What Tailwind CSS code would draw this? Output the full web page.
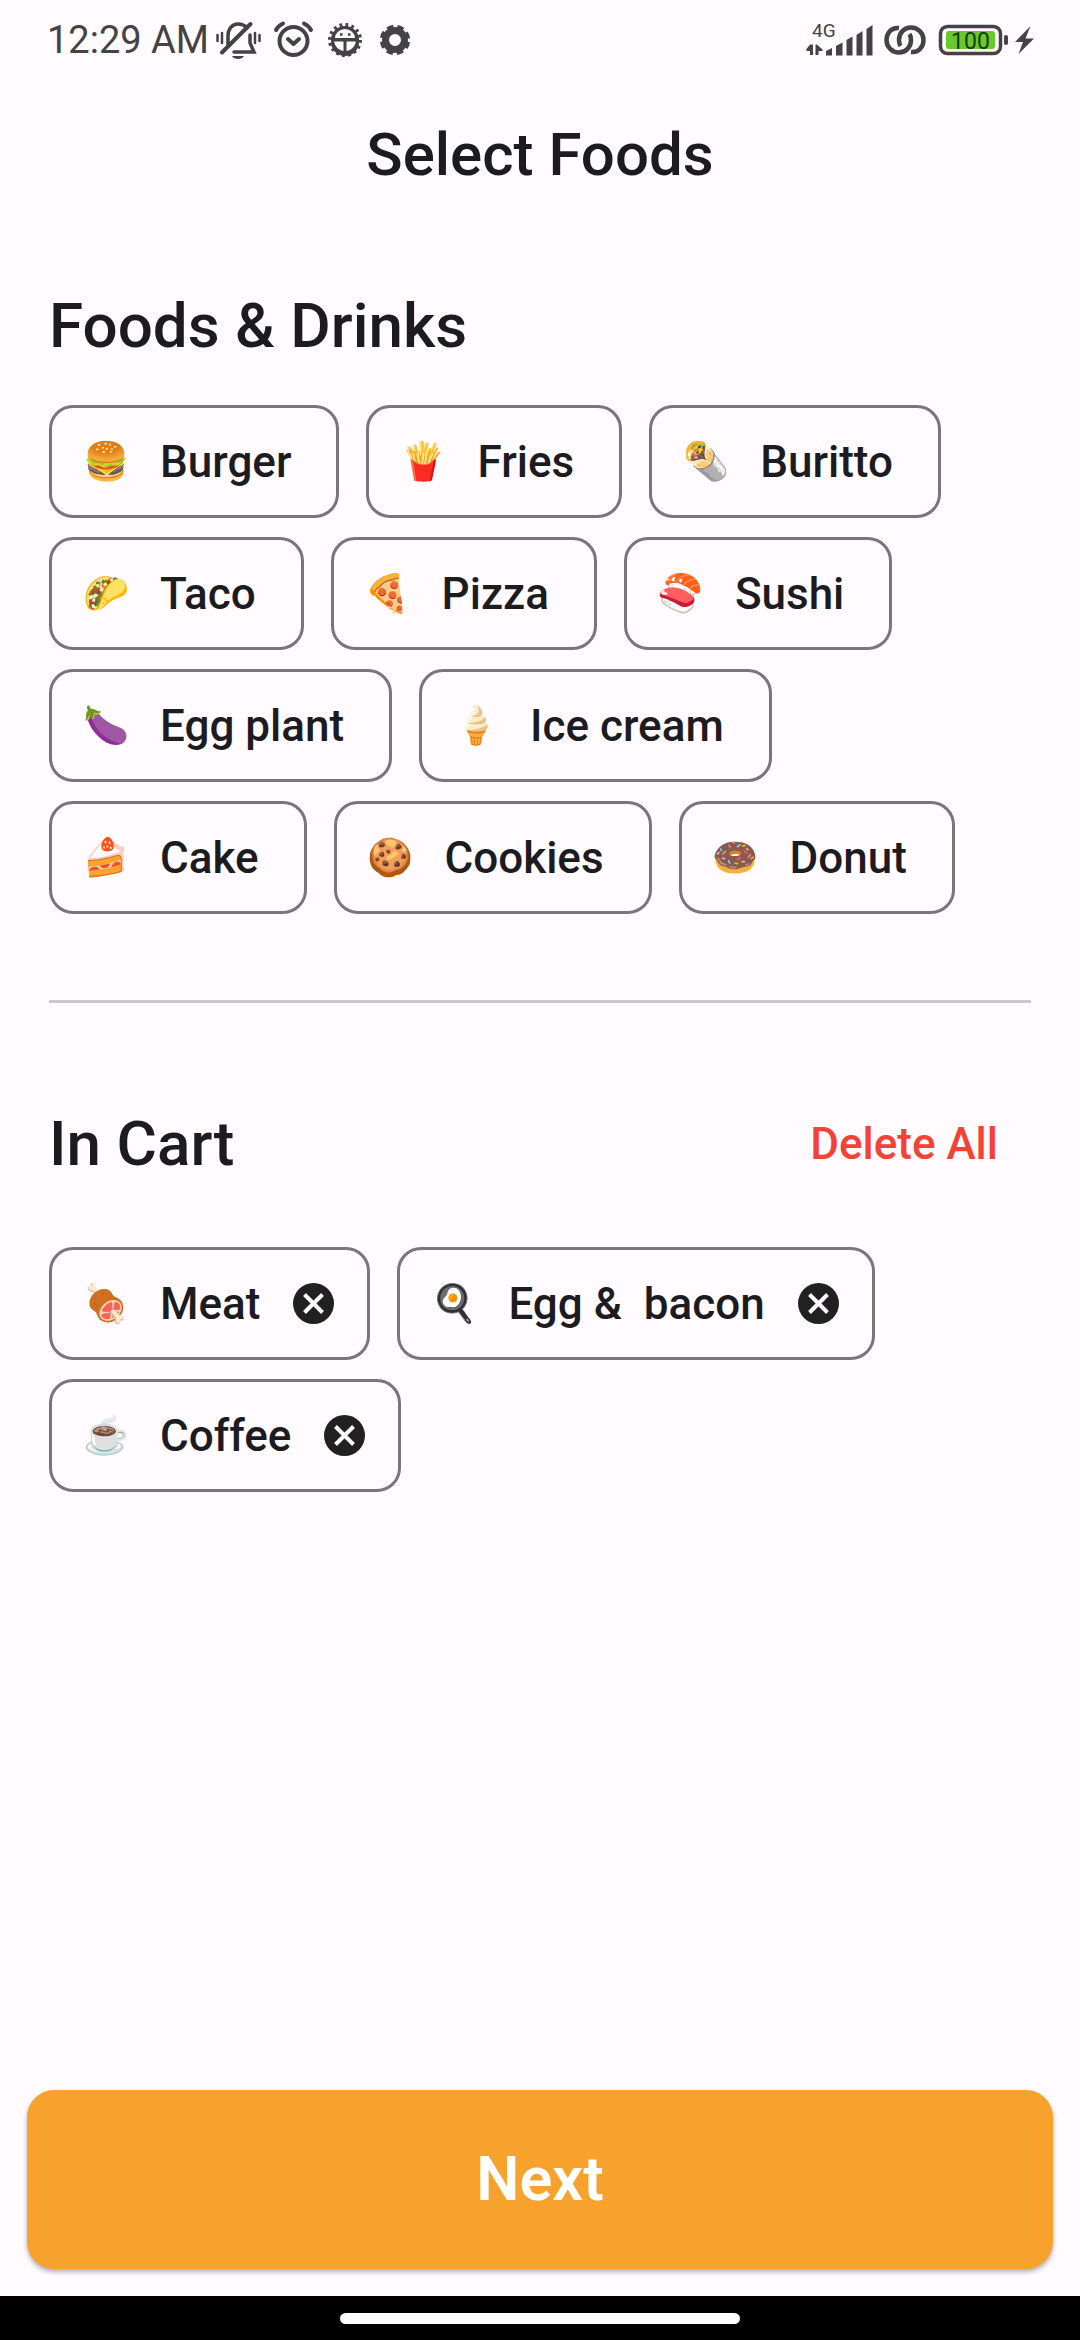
<!DOCTYPE html>
<html lang="en">
<head>
<meta charset="utf-8">
<meta name="viewport" content="width=device-width, initial-scale=1">
<title>Select Foods</title>
<script src="https://cdn.jsdelivr.net/npm/@tailwindcss/browser@4"></script>
</head>
<body class="bg-[#fffbff] font-[Roboto,'Noto_Color_Emoji',sans-serif] font-medium text-[#1c1b1f]">
<div class="flex min-h-screen flex-col">

  <!-- Status bar -->
  <div class="flex h-20 items-center justify-between pr-[46px] pl-[47px] text-[#434244]">
    <div class="flex items-center">
      <span class="text-[38px] font-normal leading-none whitespace-nowrap">12:29 AM</span>
      <svg class="ml-[6px] h-10 w-[46px]" viewBox="214 20 46 40" fill="none" stroke="currentColor" stroke-width="3" stroke-linecap="round">
        <path d="M216.500 35v6M221 33v10M254 33v10M258.500 35v6" stroke-width="2.500"/>
        <path d="M227 45V36c0-7 4-12 10-12 4 0 7 1.500 9 4M249 35v8l4 9h-20" stroke-width="3.500"/>
        <path d="M249.500 24 221 52.500" stroke-width="4"/>
        <path d="M231 56h12c-2 4-10 4-12 0z" fill="currentColor" stroke="none"/>
      </svg>
      <svg class="ml-3 h-10 w-[42px]" viewBox="273 20 42 40" fill="none" stroke="currentColor" stroke-width="4" stroke-linecap="round" stroke-linejoin="round">
        <circle cx="293.500" cy="41" r="14"/>
        <path d="m288 39 5.500 5 5.500-5M276 30c1.500-3 4-5 7-6.500M311 30c-1.500-3-4-5-7-6.500"/>
      </svg>
      <svg class="ml-3 h-10 w-[36px]" viewBox="327 20 36 40" fill="none" stroke="currentColor">
        <path d="M332.500 39a12.500 12.500 0 0 1 25 0z" fill="currentColor" stroke="none"/>
        <path d="M332.500 42a12.500 12.500 0 0 0 25 0" stroke-width="3"/>
        <circle cx="345" cy="40" r="12.500" stroke-width="3"/>
        <circle cx="345" cy="40" r="15" stroke-width="4" stroke-dasharray="2.700 3.190"/>
        <path d="M335 38a10 9 0 0 1 20 0z" fill="#fffbff" stroke="none"/>
        <path d="M332 40h26M345 41v12" stroke-width="3"/>
        <path d="M340 34.500h2.500M348 34.500h2.500" stroke-width="2.500"/>
      </svg>
      <svg class="ml-4 h-10 w-[32px]" viewBox="379 20 32 40" fill="none" stroke="currentColor">
        <circle cx="395" cy="40" r="9.500" stroke-width="7"/>
        <circle cx="395" cy="40" r="13.500" stroke-width="3.500" stroke-dasharray="6.500 4.103" stroke-dashoffset="-2"/>
      </svg>
    </div>
    <div class="flex items-center">
      <svg class="h-10 w-[68px]" viewBox="805 20 68 40" fill="currentColor">
        <text x="811" y="37" font-size="19" font-family="Roboto, sans-serif" font-weight="400">4G</text>
        <path d="M809 44.500h3V55h-3v-4h-3.500v-2zM814.500 55V44.500h1.500l5.500 5v1.500h-4V55z"/>
        <path d="M825 51l6-3v7.500h-6zM835 46l6.500-3.500v13H835zM845.500 40l6-3.500v19h-6zM855.500 35l6-4v24.500h-6zM865.500 29l6-4v30.500h-6z"/>
      </svg>
      <svg class="ml-[10px] h-10 w-[42px]" viewBox="883 20 42 40" fill="none" stroke="currentColor" stroke-width="4.500">
        <path d="M898 28C890 27 885.500 33.500 885.500 40a12.500 12.500 0 0 0 12.500 12.500c7 0 12-5.500 12-12.500 0-2.500-.5-4.500-1.500-6M910 52c8 1 12.500-5.500 12.500-12A12.500 12.500 0 0 0 910 27.500c-7 0-12 5.500-12 12.500 0 2.500.5 4.500 1.500 6"/>
      </svg>
      <svg class="ml-3 h-10 w-[70px]" viewBox="937 20 70 40">
        <rect x="939.500" y="26.500" width="60" height="27" rx="7" fill="none" stroke="currentColor" stroke-width="3.500"/>
        <rect x="945" y="31" width="49" height="18" rx="3" fill="#67c92b"/>
        <rect x="1003" y="35" width="4" height="10" rx="2" fill="currentColor"/>
        <text x="969.500" y="49" font-size="23" text-anchor="middle" font-family="Roboto, sans-serif" font-weight="400" fill="#1e3a10">100</text>
      </svg>
      <svg class="ml-[6px] h-10 w-5" viewBox="1013 20 20 40" fill="currentColor">
        <path d="M1029.500 26 1014 42h8l-4.500 12L1033 38.500h-8.500z"/>
      </svg>
    </div>
  </div>

  <header class="flex h-[150px] items-center justify-center">
    <h1 class="text-[60px] leading-[72px]">Select Foods</h1>
  </header>

  <main class="flex flex-1 flex-col px-[49px]">
    <h2 class="mt-[60px] text-[62px] leading-[72px]">Foods &amp; Drinks</h2>
    <div class="mt-[43px] flex flex-wrap gap-x-[27px] gap-y-[19px] text-[44px] leading-[52px]">
      <button class="flex h-[113px] items-center rounded-3xl border-3 border-[#79747e] pr-[45px] pl-[30px]"><span class="mr-[30px] flex w-12 justify-center text-[37px]">🍔</span>Burger</button>
      <button class="flex h-[113px] items-center rounded-3xl border-3 border-[#79747e] pr-[45px] pl-[30px]"><span class="mr-[30px] flex w-12 justify-center text-[37px]">🍟</span>Fries</button>
      <button class="flex h-[113px] items-center rounded-3xl border-3 border-[#79747e] pr-[45px] pl-[30px]"><span class="mr-[30px] flex w-12 justify-center text-[37px]">🌯</span>Buritto</button>
      <button class="flex h-[113px] items-center rounded-3xl border-3 border-[#79747e] pr-[45px] pl-[30px]"><span class="mr-[30px] flex w-12 justify-center text-[37px]">🌮</span>Taco</button>
      <button class="flex h-[113px] items-center rounded-3xl border-3 border-[#79747e] pr-[45px] pl-[30px]"><span class="mr-[30px] flex w-12 justify-center text-[37px]">🍕</span>Pizza</button>
      <button class="flex h-[113px] items-center rounded-3xl border-3 border-[#79747e] pr-[45px] pl-[30px]"><span class="mr-[30px] flex w-12 justify-center text-[37px]">🍣</span>Sushi</button>
      <button class="flex h-[113px] items-center rounded-3xl border-3 border-[#79747e] pr-[45px] pl-[30px]"><span class="mr-[30px] flex w-12 justify-center text-[37px]">🍆</span>Egg plant</button>
      <button class="flex h-[113px] items-center rounded-3xl border-3 border-[#79747e] pr-[45px] pl-[30px]"><span class="mr-[30px] flex w-12 justify-center text-[37px]">🍦</span>Ice cream</button>
      <button class="flex h-[113px] items-center rounded-3xl border-3 border-[#79747e] pr-[45px] pl-[30px]"><span class="mr-[30px] flex w-12 justify-center text-[37px]">🍰</span>Cake</button>
      <button class="flex h-[113px] items-center rounded-3xl border-3 border-[#79747e] pr-[45px] pl-[30px]"><span class="mr-[30px] flex w-12 justify-center text-[37px]">🍪</span>Cookies</button>
      <button class="flex h-[113px] items-center rounded-3xl border-3 border-[#79747e] pr-[45px] pl-[30px]"><span class="mr-[30px] flex w-12 justify-center text-[37px]">🍩</span>Donut</button>
    </div>

    <hr class="mt-[86px] border-t-3 border-[#cac4d0]">

    <div class="mt-[105px] flex items-center justify-between">
      <h2 class="text-[62px] leading-[72px]">In Cart</h2>
      <button class="pr-[33px] text-[44px] leading-[52px] text-[#f44336]">Delete All</button>
    </div>
    <div class="mt-[67px] flex flex-wrap gap-x-[27px] gap-y-[19px] text-[44px] leading-[52px]">
      <div class="flex h-[113px] items-center rounded-3xl border-3 border-[#79747e] pr-[33px] pl-[30px]"><span class="mr-[30px] flex w-12 justify-center text-[37px]">🍖</span>Meat<button class="ml-[33px]" aria-label="Remove Meat"><svg class="size-[41px]" viewBox="0 0 41 41"><circle cx="20.500" cy="20.500" r="20.500" fill="#212121"/><path d="m11.500 11.500 18 18M29.500 11.500 11.500 29.500" stroke="#fffbff" stroke-width="4"/></svg></button></div>
      <div class="flex h-[113px] items-center rounded-3xl border-3 border-[#79747e] pr-[33px] pl-[30px]"><span class="mr-[30px] flex w-12 justify-center text-[37px]">🍳</span><span class="whitespace-pre">Egg &amp;  bacon</span><button class="ml-[33px]" aria-label="Remove Egg &amp; bacon"><svg class="size-[41px]" viewBox="0 0 41 41"><circle cx="20.500" cy="20.500" r="20.500" fill="#212121"/><path d="m11.500 11.500 18 18M29.500 11.500 11.500 29.500" stroke="#fffbff" stroke-width="4"/></svg></button></div>
      <div class="flex h-[113px] items-center rounded-3xl border-3 border-[#79747e] pr-[33px] pl-[30px]"><span class="mr-[30px] flex w-12 justify-center text-[37px]">☕</span>Coffee<button class="ml-[33px]" aria-label="Remove Coffee"><svg class="size-[41px]" viewBox="0 0 41 41"><circle cx="20.500" cy="20.500" r="20.500" fill="#212121"/><path d="m11.500 11.500 18 18M29.500 11.500 11.500 29.500" stroke="#fffbff" stroke-width="4"/></svg></button></div>
    </div>
  </main>

  <div class="px-[27px] pb-[27px]">
    <button class="flex h-[179px] w-full items-center justify-center rounded-[27px] bg-[#f7a22d] text-[61px] font-semibold text-white shadow-[0_3px_5px_rgba(0,0,0,0.3)]">Next</button>
  </div>
  <div class="flex h-11 items-center justify-center bg-black">
    <div class="h-[11px] w-[400px] rounded-full bg-white"></div>
  </div>
</div>
</body>
</html>
